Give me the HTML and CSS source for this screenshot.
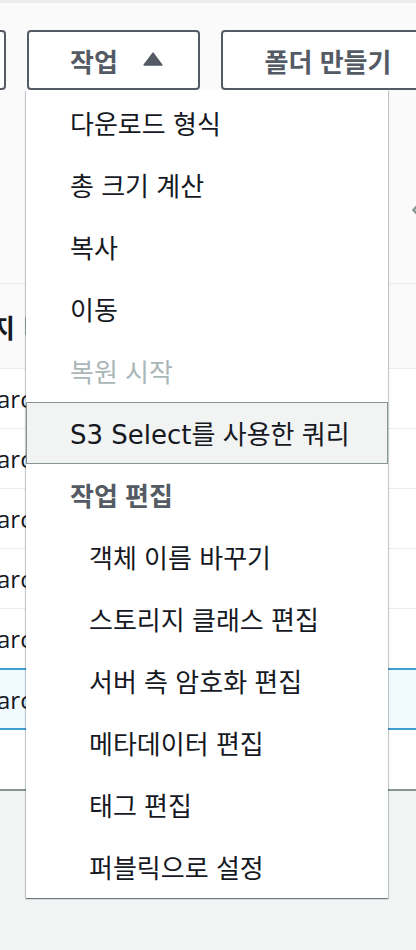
FILE: index.html
```html
<!DOCTYPE html>
<html lang="ko">
<head>
<meta charset="utf-8">
<title>S3 작업 메뉴</title>
<link rel="stylesheet" href="styles.css">
</head>
<body>
<div class="page">
  <div class="topstrip"></div>
  <div class="panel">
    <div class="toolbar">
      <button class="btn btn-left">새로 고침</button>
      <div class="dropdown">
        <button class="btn btn-actions"><span>작업</span><svg class="caret" width="20" height="14" viewBox="0 0 20 14"><path d="M10 1.2 L18.8 13 L1.2 13 Z" fill="#545b64" stroke="#545b64" stroke-width="1.6" stroke-linejoin="round"/></svg></button>
        <ul class="menu">
          <li class="item">다운로드 형식</li>
          <li class="item">총 크기 계산</li>
          <li class="item">복사</li>
          <li class="item">이동</li>
          <li class="item disabled">복원 시작</li>
          <li class="item active"><span class="latin">S3 Select</span>를 사용한 쿼리</li>
          <li class="item group">작업 편집</li>
          <li class="item sub">객체 이름 바꾸기</li>
          <li class="item sub">스토리지 클래스 편집</li>
          <li class="item sub">서버 측 암호화 편집</li>
          <li class="item sub">메타데이터 편집</li>
          <li class="item sub">태그 편집</li>
          <li class="item sub">퍼블릭으로 설정</li>
        </ul>
      </div>
      <button class="btn btn-folder">폴더 만들기</button>
    </div>
    <div class="pager">
      <svg width="8" height="14" viewBox="0 0 8 14"><path d="M7 1 L1.5 7 L7 13" fill="none" stroke="#879596" stroke-width="2.4"/></svg>
    </div>
  </div>
  <div class="table">
    <div class="thead"><span class="th">리지</span><span class="sort"></span></div>
    <div class="row"><span class="cell">archive</span></div>
    <div class="row"><span class="cell">archive</span></div>
    <div class="row"><span class="cell">archive</span></div>
    <div class="row"><span class="cell">archive</span></div>
    <div class="row"><span class="cell">archive</span></div>
    <div class="row selected"><span class="cell">archive</span></div>
    <div class="row last"></div>
  </div>
</div>
</body>
</html>
```

FILE: styles.css
```css
* { box-sizing: border-box; }
html, body {
  margin: 0;
  padding: 0;
  background: #f2f3f3;
}
body {
  font-family: "Noto Sans CJK KR", "Noto Sans", sans-serif;
  color: #16191f;
}
.page {
  width: 416px;
  height: 950px;
  overflow: hidden;
  background: #f2f3f3;
}
.topstrip {
  height: 3px;
  background: #eaeded;
}
.panel {
  height: 280px;
  background: #fafafa;
  padding-top: 27px;
}
.toolbar {
  display: flex;
  align-items: flex-start;
  gap: 21px;
  height: 60px;
}
.btn {
  height: 60px;
  border: 2px solid #545b64;
  border-radius: 4px;
  background: #ffffff;
  color: #545b64;
  font-family: "Noto Sans CJK KR", sans-serif;
  font-weight: 700;
  font-size: 26px;
  padding: 0;
  display: flex;
  align-items: center;
  justify-content: center;
  flex: none;
  white-space: nowrap;
  overflow: hidden;
}
.btn-left {
  width: 100px;
  margin-left: -94px;
  color: transparent;
}
.dropdown {
  position: relative;
  flex: none;
}
.btn-actions {
  width: 173px;
  gap: 25px;
  padding-left: 6px;
}
.caret { display: block; margin-top: -2px; }
.btn-folder {
  width: 214px;
}
.menu {
  position: absolute;
  top: 60px;
  left: -1px;
  width: 362px;
  margin: 0;
  padding: 2px 0 0 0;
  list-style: none;
  background: #ffffff;
  box-shadow: 0 1px 1px 0 rgba(0, 28, 36, 0.35), 1px 1px 1px 0 rgba(0, 28, 36, 0.18), -1px 1px 1px 0 rgba(0, 28, 36, 0.18);
  z-index: 10;
}
.item {
  height: 62px;
  line-height: 60px;
  border: 1px solid transparent;
  padding-left: 43px;
  font-size: 26px;
  color: #16191f;
  white-space: nowrap;
}
.item.disabled { color: #aab7b8; }
.item.active {
  background: #f2f3f3;
  border-color: #879596;
}
.item.group {
  font-weight: 700;
  color: #545b64;
}
.item.sub { padding-left: 62px; }
.latin {
  font-family: "DejaVu Sans", sans-serif;
  font-size: 26px;
}
.pager {
  display: flex;
  justify-content: flex-end;
  margin-top: 113px;
  margin-right: -4px;
  height: 14px;
}
.pager svg { display: block; }
.table {
  background: #ffffff;
  border-top: 1px solid #eaeded;
}
.thead {
  height: 85px;
  background: #fafafa;
  border-bottom: 1px solid #eaeded;
  display: flex;
  align-items: center;
  gap: 10px;
  margin-left: -33px;
}
.th {
  font-weight: 700;
  font-size: 26px;
  color: #16191f;
}
.sort {
  width: 3px;
  height: 18px;
  background: #aab7b8;
}
.row {
  height: 60px;
  border-bottom: 1px solid #eaeded;
  display: flex;
  align-items: center;
  background: #ffffff;
}
.cell {
  font-family: "Open Sans", sans-serif;
  font-size: 24px;
  margin-left: -3px;
  color: #16191f;
}
.row.selected {
  height: 62px;
  background: #f1faff;
  border-top: 2px solid #3f9fd0;
  border-bottom: 2px solid #3f9fd0;
  margin-top: -1px;
}
.row.last {
  height: 61px;
  border-bottom: 2px solid #879596;
}
```
